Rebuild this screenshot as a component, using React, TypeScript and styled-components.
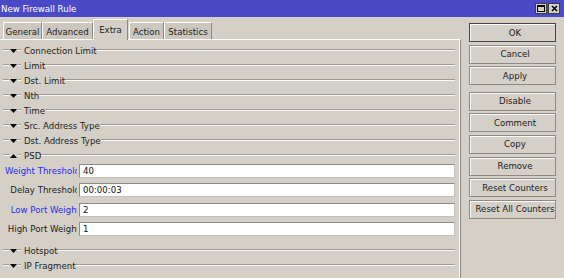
import React from "react";
import styled, { createGlobalStyle } from "styled-components";

const GlobalStyle = createGlobalStyle`
  html, body {
    margin: 0;
    padding: 0;
    background: #d4d0c8;
  }
  body {
    font-family: "DejaVu Sans", sans-serif;
    font-size: 8.6px;
    color: #1c1c1c;
  }
`

const Window = styled.div`
  width: 564px;
  height: 278px;
  overflow: hidden;
  background: #d4d0c8;
  display: flex;
  flex-direction: column;
`

const TitleBar = styled.div`
  height: 17px;
  flex: none;
  background: #4a4ac7;
  color: #fff;
  display: flex;
  align-items: center;
  padding: 0 4px 0 1px;
`

const Title = styled.span`
  flex: 1;
`

const TitleButton = styled.div`
  width: 12px;
  height: 11px;
  box-sizing: border-box;
  margin-left: 1px;
  background: #d4d0c8;
  border: 1px solid #3c3c3c;
  display: flex;
  align-items: center;
  justify-content: center;
`

const Body = styled.div`
  flex: 1;
  display: flex;
  min-height: 0;
`

const LeftPane = styled.div`
  width: 461px;
  flex: none;
  display: flex;
  flex-direction: column;
`

const TabBar = styled.div`
  height: 22px;
  flex: none;
  display: flex;
  align-items: flex-end;
  padding-left: 3px;
`

const Tab = styled.div<{ $w: number; $active?: boolean }>`
  width: ${p => p.$w}px;
  height: ${p => (p.$active ? 21 : 17)}px;
  margin-bottom: ${p => (p.$active ? -1 : 0)}px;
  margin-right: ${p => (p.$active ? 1 : 0)}px;
  box-sizing: border-box;
  position: relative;
  z-index: ${p => (p.$active ? 1 : 0)};
  background: ${p => (p.$active ? "#d4d0c8" : "#ccc8c0")};
  border-top: 1px solid #fff;
  border-left: 1px solid #fff;
  border-right: 1px solid #8a8782;
  display: flex;
  align-items: center;
  justify-content: center;
  padding-top: ${p => (p.$active ? 0 : 2)}px;
`

const Panel = styled.div`
  flex: 1;
  box-sizing: border-box;
  border-top: 1px solid #fff;
  border-right: 1px solid #8a8782;
  box-shadow: inset -1px 0 0 #fff;
  padding: 3px 5px 0 2px;
  overflow: hidden;
`

const SectionHead = styled.div<{ $gap?: number }>`
  height: 15px;
  display: flex;
  align-items: flex-start;
  margin-top: ${p => p.$gap ?? 0}px;
`

const Groove = styled.div<{ $w?: number }>`
  height: 0;
  margin-top: 6px;
  border-top: 1px solid #9d9993;
  border-bottom: 1px solid #fbfaf8;
  ${p => (p.$w ? `width: ${p.$w}px; flex: none;` : "flex: 1;")}
`

const Toggle = styled.svg`
  width: 7px;
  height: 4px;
  margin: 6px 1px 0 1px;
  flex: none;
`

const SectionLabel = styled.span`
  margin: 2px 0 0 3px;
  line-height: 13px;
  white-space: nowrap;
`

const FieldRow = styled.div<{ $gap: number }>`
  height: 14px;
  display: flex;
  align-items: center;
  margin-top: ${p => p.$gap}px;
`

const FieldLabel = styled.div<{ $required?: boolean }>`
  width: 75px;
  flex: none;
  overflow: hidden;
  display: flex;
  justify-content: flex-end;
  white-space: nowrap;
  color: ${p => (p.$required ? "#2b2bea" : "#1c1c1c")};
  span {
    margin-right: -3px;
  }
`

const FieldInput = styled.input`
  flex: 1;
  min-width: 0;
  height: 14px;
  box-sizing: border-box;
  margin: 0 0 0 2px;
  padding: 0 0 0 3px;
  border: 1px solid;
  border-color: #8f8c88 #c4c1bc #c4c1bc #8f8c88;
  background: #fff;
  font: inherit;
  color: #111;
  outline: none;
`

const ButtonColumn = styled.div`
  width: 87px;
  padding: 6px 0 0 8px;
  display: flex;
  flex-direction: column;
  gap: 2.6px;
`

const Button = styled.div<{ $primary?: boolean; $split?: boolean }>`
  height: 19px;
  box-sizing: border-box;
  flex: none;
  border: 1px solid ${p => (p.$primary ? "#474542" : "#8d8a85")};
  box-shadow: inset 1px 1px 0 #fbfaf8;
  margin-top: ${p => (p.$split ? 4 : 0)}px;
  padding-left: 5px;
  display: flex;
  align-items: center;
  justify-content: center;
  white-space: nowrap;
  overflow: visible;
`

const Section = ({ label, open }: { label: string; open?: boolean }) => (
  <SectionHead>
    <Groove $w={6} style={{ marginLeft: 1 }} />
    <Toggle viewBox="0 0 7 4">
      {open ? <polygon points="0,4 7,4 3.5,0" fill="#000" /> : <polygon points="0,0 7,0 3.5,4" fill="#000" />}
    </Toggle>
    <Groove $w={3} />
    <SectionLabel>{label}</SectionLabel>
    <Groove />
  </SectionHead>
)

const tabs = [
  { name: "General", w: 39 },
  { name: "Advanced", w: 51 },
  { name: "Extra", w: 35, active: true },
  { name: "Action", w: 35 },
  { name: "Statistics", w: 48 },
]

const collapsed = [
  "Connection Limit",
  "Limit",
  "Dst. Limit",
  "Nth",
  "Time",
  "Src. Address Type",
  "Dst. Address Type",
]

const fields = [
  { label: "Weight Threshold", value: "40", required: true },
  { label: "Delay Threshold", value: "00:00:03" },
  { label: "Low Port Weight", value: "2", required: true },
  { label: "High Port Weight", value: "1" },
]

const buttons = [
  "OK",
  "Cancel",
  "Apply",
  "Disable",
  "Comment",
  "Copy",
  "Remove",
  "Reset Counters",
  "Reset All Counters",
]

export default function App() {
  return (
    <>
      <GlobalStyle />
      <Window>
        <TitleBar>
          <Title>New Firewall Rule</Title>
          <TitleButton>
            <svg width="8" height="7" viewBox="0 0 8 7">
              <rect x="0.5" y="0.5" width="7" height="6" fill="none" stroke="#000" />
              <line x1="0" y1="1.5" x2="8" y2="1.5" stroke="#000" />
            </svg>
          </TitleButton>
          <TitleButton>
            <svg width="7" height="7" viewBox="0 0 7 7">
              <path d="M1 1 L6 6 M6 1 L1 6" stroke="#000" strokeWidth="1.6" />
            </svg>
          </TitleButton>
        </TitleBar>
        <Body>
          <LeftPane>
            <TabBar>
              {tabs.map(t => (
                <Tab key={t.name} $w={t.w} $active={t.active}>{t.name}</Tab>
              ))}
            </TabBar>
            <Panel>
              {collapsed.map(c => <Section key={c} label={c} />)}
              <Section label="PSD" open />
              {fields.map((f, i) => (
                <FieldRow key={f.label} $gap={i === 0 ? 1 : 5.3}>
                  <FieldLabel $required={f.required}><span>{f.label}</span></FieldLabel>
                  <FieldInput readOnly value={f.value} />
                </FieldRow>
              ))}
              <SectionHead $gap={7.4}>
                <Groove $w={6} style={{ marginLeft: 1 }} />
                <Toggle viewBox="0 0 7 4"><polygon points="0,0 7,0 3.5,4" fill="#000" /></Toggle>
                <Groove $w={3} />
                <SectionLabel>Hotspot</SectionLabel>
                <Groove />
              </SectionHead>
              <Section label="IP Fragment" />
            </Panel>
          </LeftPane>
          <ButtonColumn>
            {buttons.map((b, i) => (
              <Button key={b} $primary={i === 0} $split={b === "Disable"}>{b}</Button>
            ))}
          </ButtonColumn>
        </Body>
      </Window>
    </>
  )
}
